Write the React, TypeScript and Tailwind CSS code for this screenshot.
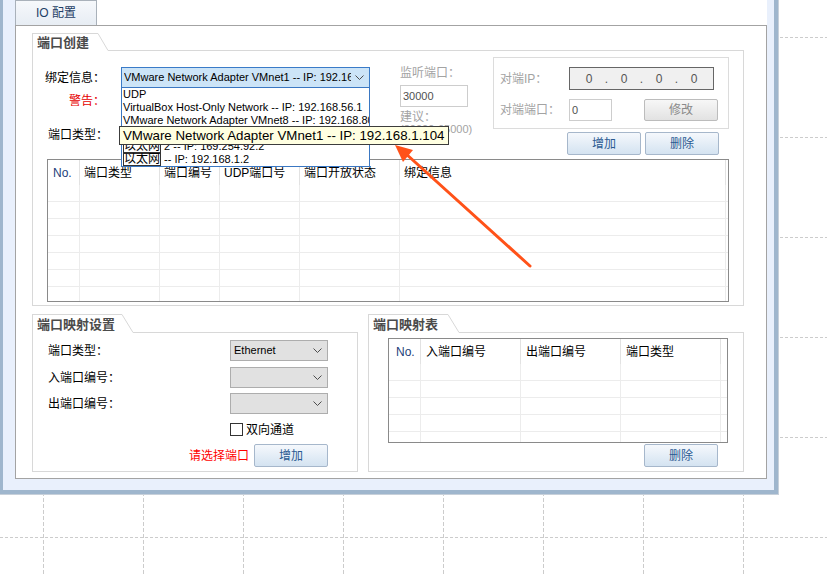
import React from "react";

const btnBlue =
  "flex items-center justify-center w-[74px] h-[23px] rounded-[2px] border border-[#a6b7cb] bg-linear-to-b from-[#f5f8fc] to-[#d4e3f1] text-[12px] leading-none text-[#2a5a92]";

function Chevron() {
  return (
    <svg width="9" height="6" viewBox="0 0 9 6" className="shrink-0">
      <path d="M0.5 0.5 L4.5 4.5 L8.5 0.5" fill="none" stroke="#4d4d4d" strokeWidth="1" />
    </svg>
  );
}

function GroupBox({
  title,
  tabW,
  diagW,
  headH,
  headHpx,
  bodyH,
  w,
  children,
}: {
  title: string;
  tabW: string;
  diagW: number;
  headH: string;
  headHpx: number;
  bodyH: string;
  w: string;
  children?: React.ReactNode;
}) {
  return (
    <div className={`flex flex-col shrink-0 ${w}`}>
      <div className={`flex ${headH}`}>
        <div
          className={`${tabW} shrink-0 border-l border-t border-[#d8d8d8] flex items-center pl-[4px] text-[13px] font-bold leading-none text-[#4b4b4b]`}
        >
          {title}
        </div>
        <svg width={diagW} height={headHpx} className="shrink-0">
          <line x1="0" y1="0.5" x2={diagW} y2={headHpx - 0.5} stroke="#d8d8d8" strokeWidth="1" />
        </svg>
        <div className="flex-1 border-b border-[#d8d8d8]" />
      </div>
      <div className={`${bodyH} border-l border-r border-b border-[#d8d8d8]`}>{children}</div>
    </div>
  );
}

type Col = { w: string; label: string; pl: string; blue?: boolean };

function DataTable({ className, cols, rows }: { className: string; cols: Col[]; rows: number }) {
  return (
    <div className={`border border-[#8a8a8a] bg-white overflow-hidden ${className}`}>
      <div className="flex h-[25px]">
        {cols.map((c, i) => (
          <div
            key={i}
            className={`${c.w} shrink-0 h-full flex items-center border-r border-[#e2e2e2] ${c.pl} text-[12px] leading-none whitespace-nowrap ${
              c.blue ? "text-[#1d3e7a]" : "text-black"
            }`}
          >
            {c.label}
          </div>
        ))}
      </div>
      {Array.from({ length: rows }).map((_, r) => (
        <div key={r} className="flex h-[17px] border-b border-[#ececec]">
          {cols.map((c, i) => (
            <div key={i} className={`${c.w} shrink-0 h-full border-r border-[#ececec]`} />
          ))}
        </div>
      ))}
    </div>
  );
}

function Boxed({ children }: { children: React.ReactNode }) {
  return (
    <span className="inline-block h-[13px] border border-[#333] text-[12px] leading-[11px] align-top">
      {children}
    </span>
  );
}

function Select({ text }: { text?: string }) {
  return (
    <div className="w-[98px] h-[21px] border border-[#adadad] bg-[#e1e1e1] flex items-center justify-between pl-[3px] pr-[5px] text-[11px] leading-none">
      <span>{text ?? ""}</span>
      <Chevron />
    </div>
  );
}

export default function App() {
  const gridX = [43, 143, 243, 343, 443, 543, 643, 743];
  const gridY = [37, 137, 237, 337, 437, 537];

  const t1: Col[] = [
    { w: "w-[32px]", label: "No.", pl: "pl-[5px]", blue: true },
    { w: "w-[80px]", label: "端口类型", pl: "pl-[4px]" },
    { w: "w-[60px]", label: "端口编号", pl: "pl-[4px]" },
    { w: "w-[80px]", label: "UDP端口号", pl: "pl-[4px]" },
    { w: "w-[100px]", label: "端口开放状态", pl: "pl-[4px]" },
    { w: "w-[326px]", label: "绑定信息", pl: "pl-[4px]" },
  ];
  const t2: Col[] = [
    { w: "w-[32px]", label: "No.", pl: "pl-[7px]", blue: true },
    { w: "w-[100px]", label: "入端口编号", pl: "pl-[5px]" },
    { w: "w-[100px]", label: "出端口编号", pl: "pl-[5px]" },
    { w: "w-[100px]", label: "端口类型", pl: "pl-[5px]" },
  ];

  return (
    <div className="relative w-[827px] h-[576px] overflow-hidden bg-white text-black font-['Liberation_Sans','Noto_Sans_CJK_SC',sans-serif]">
      {/* background canvas grid */}
      <svg className="absolute left-0 top-0" width="827" height="576">
        {gridX.map((x) => (
          <line key={"x" + x} x1={x + 0.5} y1="0" x2={x + 0.5} y2="576" stroke="#cccccc" strokeWidth="1" strokeDasharray="4 2" />
        ))}
        {gridY.map((y) => (
          <line key={"y" + y} x1="0" y1={y + 0.5} x2="827" y2={y + 0.5} stroke="#cccccc" strokeWidth="1" strokeDasharray="3 2" />
        ))}
      </svg>

      {/* window */}
      <div className="relative z-10 w-[779px] h-[495px] border-r border-b border-[#c7d0da]">
        <div className="h-full flex flex-col border-l-[3px] border-r-[4px] border-b-[4px] border-[#9fb6cd] bg-[#e9f0fc] pl-[12px] pr-[7px] pb-[11px]">
          {/* tab strip */}
          <div className="h-[25px] shrink-0 flex bg-white">
            <div className="w-[82px] h-full border-l border-t border-r border-[#a9b1ba] bg-linear-to-b from-[#f6f8fb] to-[#e7edf4] flex items-center justify-center text-[12px] leading-none text-[#1f3f66]">
              IO 配置
            </div>
          </div>
          {/* tab page */}
          <div className="h-[454px] shrink-0 border border-[#a3a3a3] bg-white pt-[7px] pl-[16px] pr-[22px] pb-[6px] flex flex-col">
            {/* group 1 */}
            <GroupBox title="端口创建" tabW="w-[66px]" diagW={10} headH="h-[18px]" headHpx={18} bodyH="h-[255px]" w="w-[712px]">
              <div className="flex h-[108px]">
                {/* left column */}
                <div className="ml-[12px] w-[325px] pt-[16px] flex flex-col">
                  <div className="flex items-center h-[21px]">
                    <div className="w-[76px] text-[12px] leading-none">绑定信息：</div>
                    <div className="relative w-[249px] h-[21px]">
                      <div className="h-full border border-[#3a7bc8] bg-[#cce4f7] flex items-center pl-[2px] pr-[5px]">
                        <div className="flex-1 overflow-hidden whitespace-nowrap text-[11px] leading-none">
                          VMware Network Adapter VMnet1 -- IP: 192.168.1.104
                        </div>
                        <div className="ml-[4px]">
                          <Chevron />
                        </div>
                      </div>
                      <div className="absolute left-0 top-[20px] z-20 w-[249px] border border-[#3a77c2] bg-white">
                        {[
                          <>UDP</>,
                          <>VirtualBox Host-Only Network -- IP: 192.168.56.1</>,
                          <>VMware Network Adapter VMnet8 -- IP: 192.168.80.1</>,
                          <>VMware Network Adapter VMnet1 -- IP: 192.168.1.104</>,
                          <>
                            <Boxed>以太网</Boxed> 2 -- IP: 169.254.92.2
                          </>,
                          <>
                            <Boxed>以太网</Boxed> -- IP: 192.168.1.2
                          </>,
                        ].map((it, i) => (
                          <div key={i} className="h-[13px] pl-[1px] text-[11px] leading-[13px] whitespace-nowrap overflow-hidden">
                            {it}
                          </div>
                        ))}
                      </div>
                    </div>
                  </div>
                  <div className="mt-[6px] pl-[24px] text-[12px] leading-[14px] text-[#e60000]">警告：</div>
                  <div className="mt-[20px] pl-[3px] text-[12px] leading-[14px]">端口类型：</div>
                </div>

                {/* middle column */}
                <div className="ml-[30px] w-[80px] pt-[15px] flex flex-col text-[#a3a3a3]">
                  <div className="text-[12px] leading-[14px]">监听端口：</div>
                  <div className="mt-[5px] w-[68px] h-[22px] border border-[#cdcdcd] flex items-center pl-[2px] text-[11px] leading-none text-[#505050]">
                    30000
                  </div>
                  <div className="mt-[4px] text-[12px] leading-[12px]">建议：</div>
                  <div className="text-[11px] leading-[12px] whitespace-nowrap">(30000-65000)</div>
                </div>

                {/* right column */}
                <div className="ml-[13px] w-[236px] pt-[6px] flex flex-col">
                  <div className="h-[72px] border border-[#dcdcdc] pt-[9px] pl-[6px] flex flex-col">
                    <div className="flex items-center h-[23px]">
                      <div className="w-[69px] text-[12px] leading-none text-[#a3a3a3]">对端IP：</div>
                      <div className="w-[145px] h-[23px] border border-[#666] bg-[#f0f0f0] flex items-center pl-[15px] text-[12px] leading-none text-[#555]">
                        <span className="w-[8px] text-center">0</span>
                        <span className="w-[27px] text-center">.</span>
                        <span className="w-[8px] text-center">0</span>
                        <span className="w-[27px] text-center">.</span>
                        <span className="w-[8px] text-center">0</span>
                        <span className="w-[27px] text-center">.</span>
                        <span className="w-[8px] text-center">0</span>
                      </div>
                    </div>
                    <div className="mt-[9px] flex items-center h-[22px]">
                      <div className="w-[69px] text-[12px] leading-none text-[#a3a3a3]">对端端口：</div>
                      <div className="w-[43px] h-[22px] border border-[#cdcdcd] flex items-center pl-[2px] text-[11px] leading-none text-[#505050]">
                        0
                      </div>
                      <div className="ml-[32px] w-[74px] h-[22px] rounded-[2px] border border-[#bcbcbc] bg-linear-to-b from-[#f7f7f7] to-[#e2e2e2] flex items-center justify-center text-[12px] leading-none text-[#8a8a8a]">
                        修改
                      </div>
                    </div>
                  </div>
                  <div className="mt-[3px] flex justify-end gap-[4px] pr-[10px]">
                    <div className={btnBlue}>增加</div>
                    <div className={btnBlue}>删除</div>
                  </div>
                </div>
              </div>
              <DataTable className="ml-[14px] w-[682px] h-[143px]" cols={t1} rows={7} />
            </GroupBox>

            {/* groups 2 + 3 */}
            <div className="mt-[8px] flex gap-[10px]">
              <GroupBox title="端口映射设置" tabW="w-[90px]" diagW={11} headH="h-[19px]" headHpx={19} bodyH="h-[139px]" w="w-[326px]">
                <div className="pt-[7px] flex flex-col">
                  <div className="flex items-center h-[21px] pl-[15px]">
                    <div className="w-[182px] text-[12px] leading-none">端口类型：</div>
                    <Select text="Ethernet" />
                  </div>
                  <div className="mt-[6px] flex items-center h-[21px] pl-[15px]">
                    <div className="w-[182px] text-[12px] leading-none">入端口编号：</div>
                    <Select />
                  </div>
                  <div className="mt-[5px] flex items-center h-[21px] pl-[15px]">
                    <div className="w-[182px] text-[12px] leading-none">出端口编号：</div>
                    <Select />
                  </div>
                  <div className="mt-[9px] flex items-center h-[13px] pl-[197px]">
                    <div className="w-[13px] h-[13px] border border-[#333] bg-white" />
                    <div className="ml-[3px] text-[12px] leading-none">双向通道</div>
                  </div>
                  <div className="mt-[8px] flex items-center justify-end pr-[29px]">
                    <div className="mr-[5px] text-[12px] leading-none text-[#f00]">请选择端口</div>
                    <div className={btnBlue}>增加</div>
                  </div>
                </div>
              </GroupBox>
              <GroupBox title="端口映射表" tabW="w-[80px]" diagW={11} headH="h-[19px]" headHpx={19} bodyH="h-[139px]" w="w-[376px]">
                <div className="pt-[5px] flex flex-col">
                  <DataTable className="ml-[19px] w-[340px] h-[105px]" cols={t2} rows={5} />
                  <div className="mt-[1px] flex justify-end pr-[25px]">
                    <div className={btnBlue}>删除</div>
                  </div>
                </div>
              </GroupBox>
            </div>
          </div>
        </div>
      </div>

      {/* tooltip over dropdown item */}
      <div className="absolute left-[119px] top-[126px] z-30 h-[19px] border border-[#3c3c3c] bg-[#ffffe1] px-[3px] flex items-center text-[13.3px] leading-none whitespace-nowrap">
        VMware Network Adapter VMnet1 -- IP: 192.168.1.104
      </div>

      {/* annotation arrow */}
      <svg className="absolute left-0 top-0 z-40 pointer-events-none" width="827" height="576">
        <line x1="530" y1="266" x2="405" y2="153" stroke="#ff5219" strokeWidth="3" strokeLinecap="round" />
        <polygon points="395,145 413,150 403,162" fill="#ff5219" />
      </svg>
    </div>
  );
}
